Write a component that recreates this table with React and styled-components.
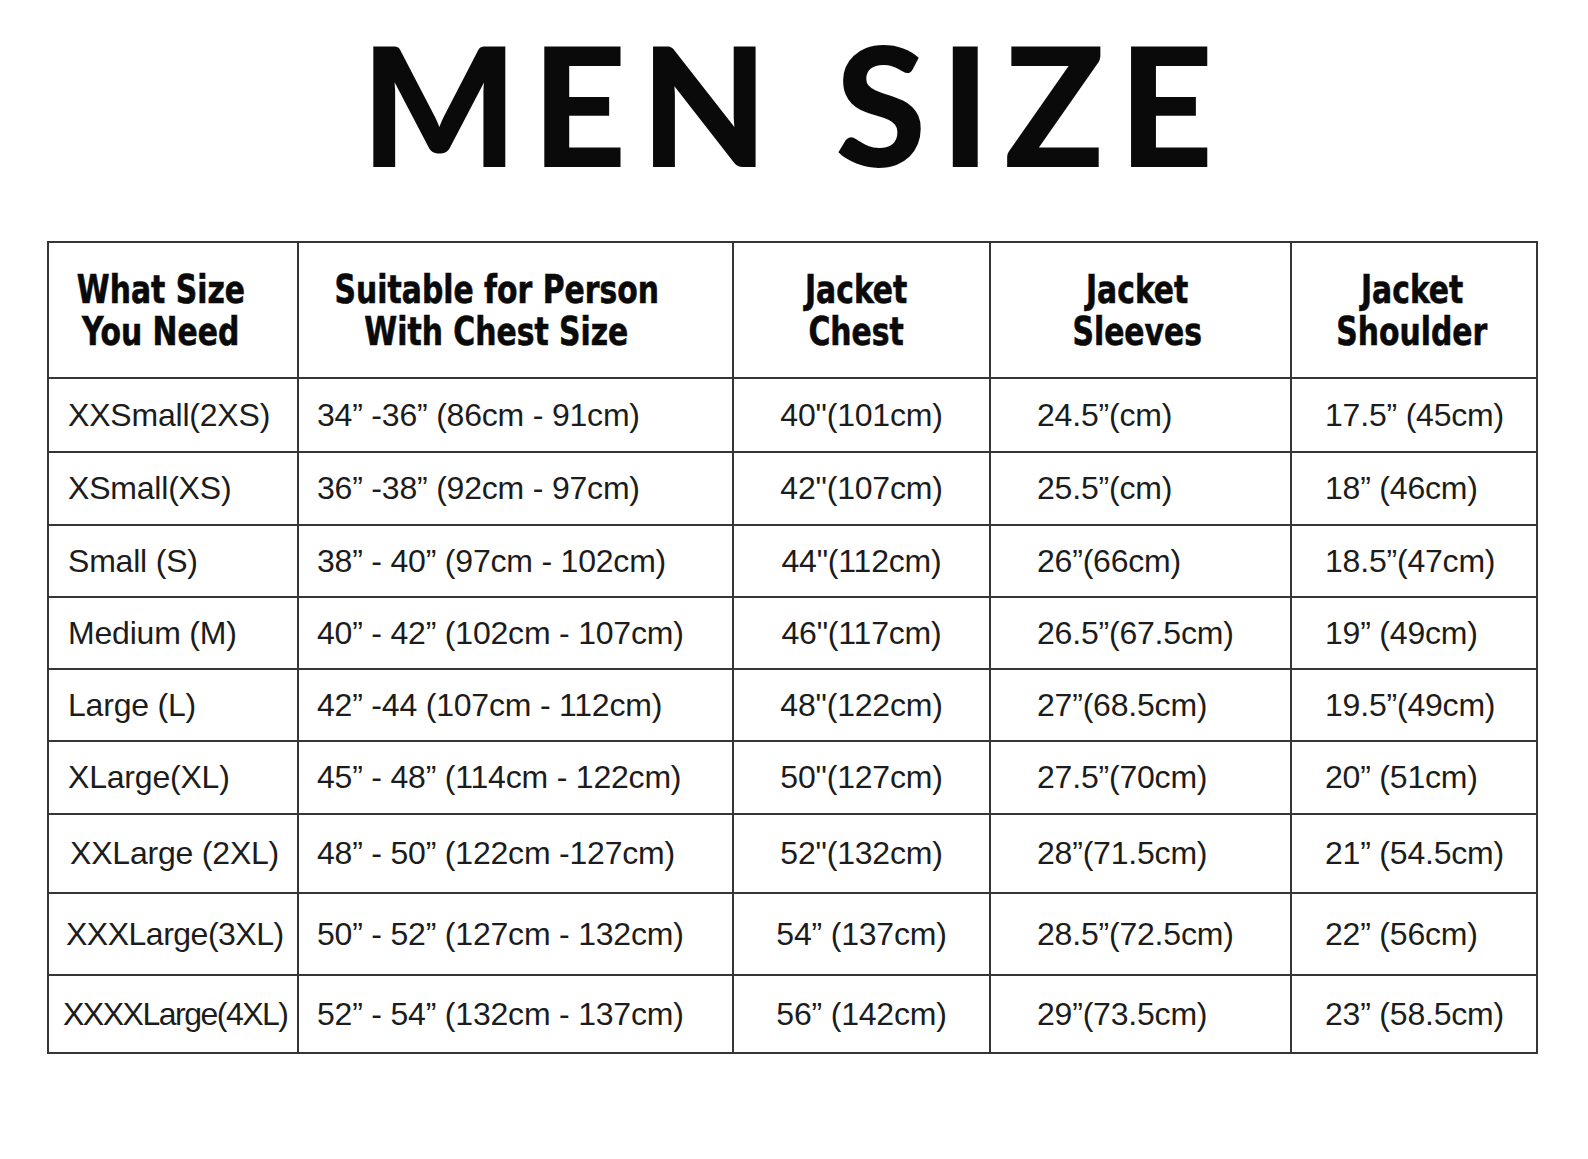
import React from 'react';
import styled, { createGlobalStyle } from 'styled-components';

const GlobalStyle = createGlobalStyle`
  html, body {
    margin: 0;
    padding: 0;
    background: #ffffff;
  }
  * {
    box-sizing: border-box;
  }
`;

const columns = [
  { key: 'size', width: 250, headPad: 24, align: 'left', pad: 19 },
  { key: 'person', width: 435, headPad: 38, align: 'left', pad: 18 },
  { key: 'chest', width: 257, headPad: 10, align: 'center', pad: 0 },
  { key: 'sleeves', width: 301, headPad: 6, align: 'left', pad: 46 },
  { key: 'shoulder', width: 246, headPad: 4, align: 'left', pad: 33 },
];

const headings = [
  ['What Size', 'You Need'],
  ['Suitable for Person', 'With Chest Size'],
  ['Jacket', 'Chest'],
  ['Jacket', 'Sleeves'],
  ['Jacket', 'Shoulder'],
];

// labelPad / labelSpacing nudge the size label where the chart squeezes it
const rows = [
  { height: 74, cells: ['XXSmall(2XS)', '34” -36” (86cm - 91cm)', '40"(101cm)', '24.5”(cm)', '17.5” (45cm)'] },
  { height: 73, cells: ['XSmall(XS)', '36” -38” (92cm - 97cm)', '42"(107cm)', '25.5”(cm)', '18” (46cm)'] },
  { height: 72, cells: ['Small (S)', '38” - 40” (97cm - 102cm)', '44"(112cm)', '26”(66cm)', '18.5”(47cm)'] },
  { height: 72, cells: ['Medium (M)', '40” - 42” (102cm - 107cm)', '46"(117cm)', '26.5”(67.5cm)', '19” (49cm)'] },
  { height: 72, cells: ['Large (L)', '42” -44 (107cm - 112cm)', '48"(122cm)', '27”(68.5cm)', '19.5”(49cm)'] },
  { height: 73, cells: ['XLarge(XL)', '45” - 48” (114cm - 122cm)', '50"(127cm)', '27.5”(70cm)', '20” (51cm)'] },
  { height: 79, labelPad: 21, cells: ['XXLarge (2XL)', '48” - 50” (122cm -127cm)', '52"(132cm)', '28”(71.5cm)', '21” (54.5cm)'] },
  { height: 82, labelPad: 17, labelSpacing: -0.5, cells: ['XXXLarge(3XL)', '50” - 52” (127cm - 132cm)', '54” (137cm)', '28.5”(72.5cm)', '22” (56cm)'] },
  { height: 78, labelPad: 14, labelSpacing: -1.5, cells: ['XXXXLarge(4XL)', '52” - 54” (132cm - 137cm)', '56” (142cm)', '29”(73.5cm)', '23” (58.5cm)'] },
];

const gridColumns = columns.map((c) => `${c.width}px`).join(' ');

const Page = styled.div`
  width: 1588px;
  min-height: 1159px;
  padding: 21px 0 0 47px;
  background: #ffffff;
`;

const Title = styled.h1`
  margin: 0 0 55px -47px;
  width: 1588px;
  height: 165px;
  text-align: center;
  font-family: Lato, 'Liberation Sans', sans-serif;
  font-weight: 900;
  font-size: 165px;
  line-height: 1;
  letter-spacing: 14px;
  color: #0a0a0a;
`;

const Table = styled.div`
  display: flex;
  flex-direction: column;
  width: fit-content;
  border-top: 2px solid #363636;
  border-left: 2px solid #363636;
`;

const Row = styled.div`
  display: grid;
  grid-template-columns: ${gridColumns};
  height: ${(p) => p.$height}px;
`;

const Cell = styled.div`
  display: flex;
  align-items: center;
  justify-content: ${(p) => (p.$align === 'center' ? 'center' : 'flex-start')};
  padding-left: ${(p) => p.$pad}px;
  border-right: 2px solid #363636;
  border-bottom: 2px solid #363636;
  white-space: nowrap;
  font-family: 'Liberation Sans', Arial, sans-serif;
  font-size: 32px;
  letter-spacing: ${(p) => p.$spacing}px;
  color: #1c1c1c;
`;

const HeadCell = styled.div`
  display: flex;
  flex-direction: column;
  align-items: center;
  justify-content: center;
  padding-right: ${(p) => p.$shift}px;
  padding-top: 2px;
  border-right: 2px solid #363636;
  border-bottom: 2px solid #363636;
`;

const HeadLine = styled.span`
  display: block;
  transform: scaleX(0.85);
  font-family: 'DejaVu Sans Condensed', 'DejaVu Sans', sans-serif;
  font-stretch: condensed;
  font-weight: 700;
  font-size: 39px;
  line-height: 42px;
  color: #0a0a0a;
  -webkit-text-stroke: 0.6px #0a0a0a;
  white-space: nowrap;
`;

export default function App() {
  return (
    <Page>
      <GlobalStyle />
      <Title>MEN SIZE</Title>
      <Table>
        <Row $height={136}>
          {headings.map((lines, i) => (
            <HeadCell key={columns[i].key} $shift={columns[i].headPad}>
              {lines.map((line) => (
                <HeadLine key={line}>{line}</HeadLine>
              ))}
            </HeadCell>
          ))}
        </Row>
        {rows.map((row) => (
          <Row key={row.cells[0]} $height={row.height}>
            {row.cells.map((text, i) => {
              const first = i === 0;
              return (
                <Cell
                  key={columns[i].key}
                  $align={columns[i].align}
                  $pad={first && row.labelPad != null ? row.labelPad : columns[i].pad}
                  $spacing={first && row.labelSpacing != null ? row.labelSpacing : -0.2}
                >
                  {text}
                </Cell>
              );
            })}
          </Row>
        ))}
      </Table>
    </Page>
  );
}
